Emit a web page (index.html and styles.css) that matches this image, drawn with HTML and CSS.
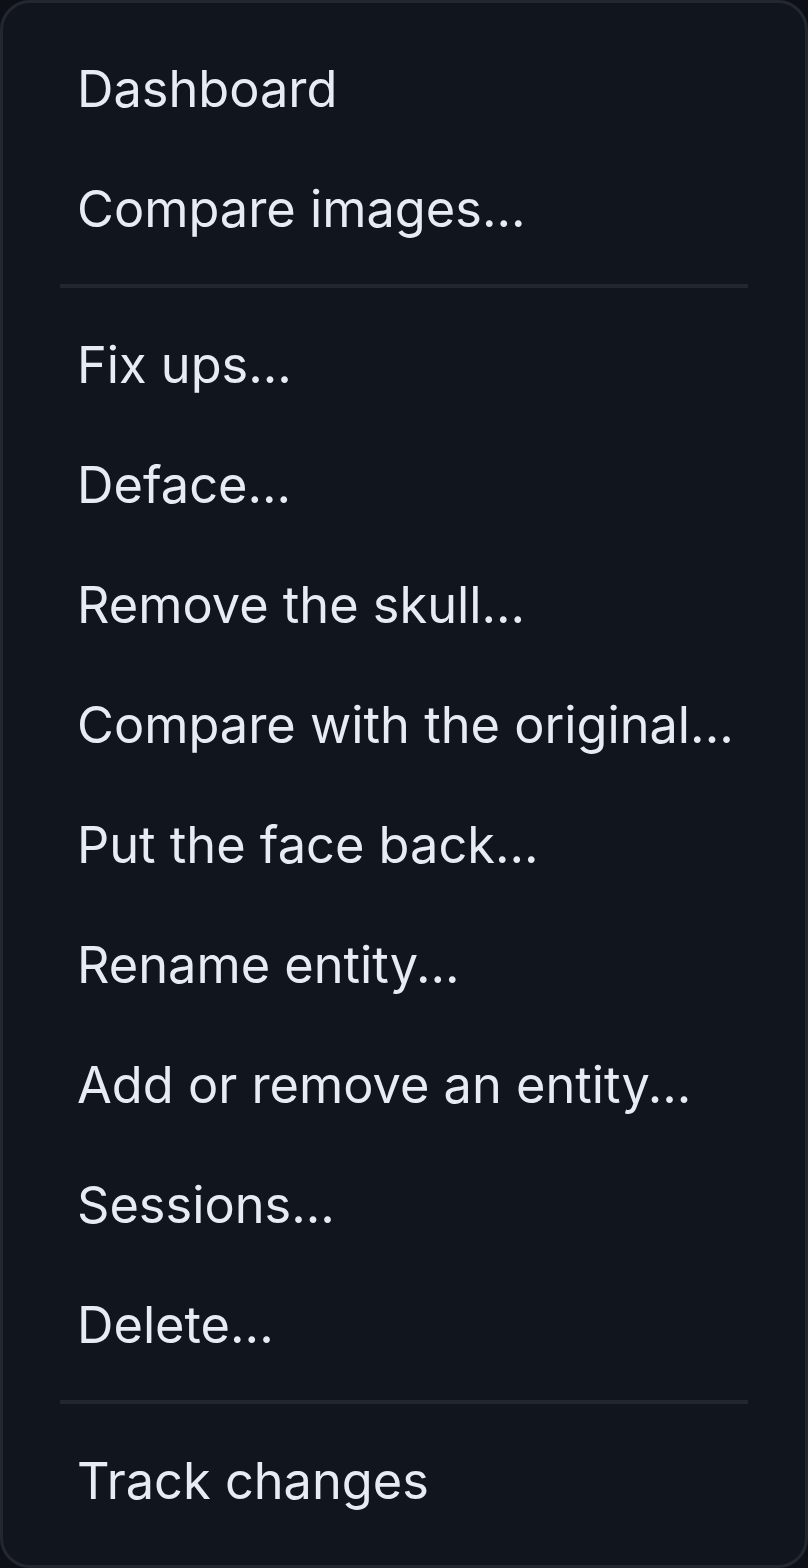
FILE: index.html
```html
<!DOCTYPE html>
<html lang="en">
<head>
<meta charset="utf-8">
<title>Menu</title>
<link rel="stylesheet" href="styles.css">
</head>
<body>
<div class="menu">
  <ul class="group">
    <li class="item">Dashboard</li>
    <li class="item">Compare images...</li>
  </ul>
  <div class="divider"></div>
  <ul class="group">
    <li class="item">Fix ups...</li>
    <li class="item">Deface...</li>
    <li class="item">Remove the skull...</li>
    <li class="item">Compare with the original...</li>
    <li class="item">Put the face back...</li>
    <li class="item">Rename entity...</li>
    <li class="item">Add or remove an entity...</li>
    <li class="item">Sessions...</li>
    <li class="item">Delete...</li>
  </ul>
  <div class="divider"></div>
  <ul class="group">
    <li class="item">Track changes</li>
  </ul>
</div>
</body>
</html>
```
FILE: styles.css
```css
html, body {
  margin: 0;
  padding: 0;
  background: #0d1117;
}
body {
  width: 808px;
  height: 1568px;
  overflow: hidden;
}
.menu {
  box-sizing: border-box;
  width: 808px;
  height: 1568px;
  background: #11151d;
  border: 3px solid #23272f;
  border-radius: 30px;
  padding: 26px 0 24px;
  display: flex;
  flex-direction: column;
  font-family: Inter, "Noto Sans", sans-serif;
  font-size: 50.5px;
  color: #e6ebf4;
}
.group {
  list-style: none;
  margin: 0;
  padding: 0;
}
.item {
  height: 120px;
  line-height: 120px;
  padding-left: 74px;
  white-space: nowrap;
}
.divider {
  height: 4px;
  margin: 15px 57px 17px;
  background: #22262e;
}
```
